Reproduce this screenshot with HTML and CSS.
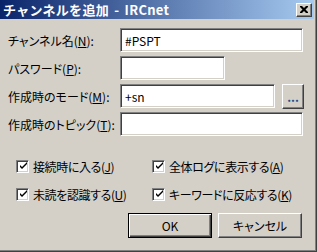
FILE: index.html
```html
<!DOCTYPE html>
<html lang="ja">
<head>
<meta charset="utf-8">
<link rel="stylesheet" href="styles.css">
</head>
<body>
<div class="window">
  <div class="titlebar">
    <span class="title">チャンネルを追加 - IRCnet</span>
    <button class="close" aria-label="閉じる">
      <svg width="8" height="7" viewBox="0 0 8 7"><path d="M0 0h2l2 2 2-2h2v1L5.5 3.5 8 6v1H6L4 5 2 7H0V6l2.5-2.5L0 1z" fill="#000"/></svg>
    </button>
  </div>
  <div class="content">
    <div class="form">
      <label class="lbl">チャンネル名(<u>N</u>):</label>
      <div class="field"><div class="input wide">#PSPT</div></div>
      <label class="lbl">パスワード(<u>P</u>):</label>
      <div class="field"><div class="input short"></div></div>
      <label class="lbl">作成時のモード(<u>M</u>):</label>
      <div class="field"><div class="input mode">+sn</div><button class="btn dots">...</button></div>
      <label class="lbl">作成時のトピック(<u>T</u>):</label>
      <div class="field"><div class="input wide"></div></div>
    </div>
    <div class="checks">
      <div class="check"><span class="box"><svg width="9" height="9" viewBox="0 0 9 9"><path d="M1 3v2l2 2 5-5V0L3 5z" fill="#000"/></svg></span>接続時に入る(<u>J</u>)</div>
      <div class="check"><span class="box"><svg width="9" height="9" viewBox="0 0 9 9"><path d="M1 3v2l2 2 5-5V0L3 5z" fill="#000"/></svg></span>全体ログに表示する(<u>A</u>)</div>
      <div class="check"><span class="box"><svg width="9" height="9" viewBox="0 0 9 9"><path d="M1 3v2l2 2 5-5V0L3 5z" fill="#000"/></svg></span>未読を認識する(<u>U</u>)</div>
      <div class="check"><span class="box"><svg width="9" height="9" viewBox="0 0 9 9"><path d="M1 3v2l2 2 5-5V0L3 5z" fill="#000"/></svg></span>キーワードに反応する(<u>K</u>)</div>
    </div>
    <div class="buttons">
      <button class="btn default">OK</button>
      <button class="btn">キャンセル</button>
    </div>
  </div>
</div>
</body>
</html>
```
FILE: styles.css
```css
* { box-sizing: border-box; }
html, body { margin: 0; padding: 0; }
body {
  width: 317px;
  height: 252px;
  overflow: hidden;
  background: #d4d0c8;
  font-family: "Noto Sans CJK JP", "DejaVu Sans", sans-serif;
  font-size: 12px;
  font-feature-settings: "palt" 1;
  color: #000;
}
.window {
  width: 317px;
  height: 252px;
  background: #d4d0c8;
  box-shadow: inset -1px -1px 0 #404040, inset -2px -2px 0 #808080;
  display: flex;
  flex-direction: column;
}
.titlebar {
  height: 19px;
  margin-right: 3px;
  background: linear-gradient(to right, #0a246a, #a6caf0);
  display: flex;
  align-items: center;
  justify-content: space-between;
  padding: 0 2px 0 3px;
}
.title {
  color: #fff;
  font-weight: bold;
  font-size: 13px;
  line-height: 18px;
  font-feature-settings: normal;
  letter-spacing: 0.3px;
  word-spacing: 2px;
}
.close {
  width: 16px;
  height: 14px;
  padding: 0;
  margin: 0;
  background: #d4d0c8;
  border-top: 1px solid #fff;
  border-left: 1px solid #fff;
  border-right: 1px solid #404040;
  border-bottom: 1px solid #404040;
  box-shadow: inset -1px -1px 0 #808080;
  display: flex;
  align-items: center;
  justify-content: center;
}
.content {
  padding: 9px 14px 0 8px;
}
.form {
  display: grid;
  grid-template-columns: 112px 1fr;
  grid-auto-rows: 24px;
  row-gap: 4px;
}
.lbl {
  display: flex;
  align-items: center;
  white-space: nowrap;
  padding-top: 1px;
}
u { text-decoration: underline; text-underline-offset: 1px; }
.field {
  display: flex;
  align-items: stretch;
}
.input {
  background: #fff;
  border-top: 1px solid #808080;
  border-left: 1px solid #808080;
  border-right: 1px solid #fff;
  border-bottom: 1px solid #fff;
  box-shadow: inset 1px 1px 0 #404040, inset -1px -1px 0 #d4d0c8;
  padding: 0 4px;
  display: flex;
  align-items: center;
  font-size: 12px;
}
.wide { width: 183px; }
.short { width: 105px; }
.mode { width: 155px; }
.btn {
  font-family: "Noto Sans CJK JP", "DejaVu Sans", sans-serif;
  font-size: 12px;
  font-feature-settings: "palt" 1;
  color: #000;
  background: #d4d0c8;
  border-top: 1px solid #fff;
  border-left: 1px solid #fff;
  border-right: 1px solid #404040;
  border-bottom: 1px solid #404040;
  box-shadow: inset -1px -1px 0 #808080;
  padding: 0;
  margin: 0;
}
.dots {
  width: 22px;
  height: 25px;
  margin-left: 7px;
  line-height: 1;
  letter-spacing: 0;
  font-weight: bold;
  color: #1a4f8a;
}
.checks {
  display: grid;
  grid-template-columns: 136px 1fr;
  grid-auto-rows: 28px;
  margin-top: 16px;
  padding-left: 8px;
}
.check {
  display: flex;
  align-items: center;
  white-space: nowrap;
  letter-spacing: -0.4px;
}
.box {
  width: 13px;
  height: 13px;
  background: #fff;
  border-top: 1px solid #808080;
  border-left: 1px solid #808080;
  border-right: 1px solid #fff;
  border-bottom: 1px solid #fff;
  box-shadow: inset 1px 1px 0 #404040, inset -1px -1px 0 #d4d0c8;
  display: flex;
  align-items: center;
  justify-content: center;
  margin-right: 4px;
  padding: 0 0 0 1px;
}
.buttons {
  display: flex;
  justify-content: flex-end;
  gap: 6px;
  margin-top: 5px;
  padding-right: 1px;
}
.buttons .btn {
  width: 84px;
  height: 25px;
}
.buttons .default {
  border: 1px solid #000;
  box-shadow: inset 1px 1px 0 #fff, inset -1px -1px 0 #404040, inset -2px -2px 0 #808080;
}
```
